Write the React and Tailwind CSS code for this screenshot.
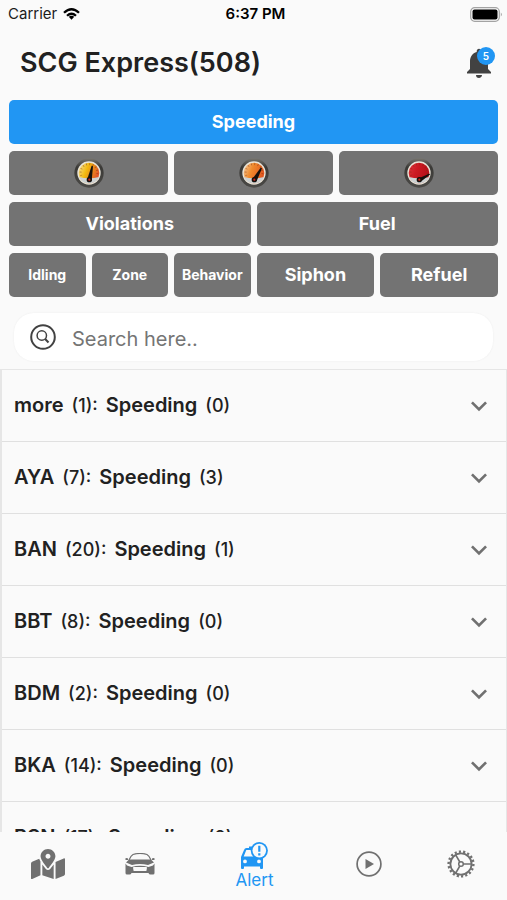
import { useState } from "react";
import { FaMapMarkedAlt } from "react-icons/fa";
import { MdKeyboardArrowDown, MdNotifications } from "react-icons/md";

const groups = [
  { name: "more", total: 1, count: 0 },
  { name: "AYA", total: 7, count: 3 },
  { name: "BAN", total: 20, count: 1 },
  { name: "BBT", total: 8, count: 0 },
  { name: "BDM", total: 2, count: 0 },
  { name: "BKA", total: 14, count: 0 },
  { name: "BSN", total: 17, count: 0 },
];

const gauges = [
  { label: "Low speeding", from: "#f7e3a0", to: "#f2b90f", edge: "#e2572b", tip: [28, 13] },
  { label: "Medium speeding", from: "#f7cfa0", to: "#f08a2c", edge: "#e2571f", tip: [34, 16] },
  { label: "High speeding", from: "#e0353c", to: "#cc1a22", edge: "#b50f18", tip: [39, 25] },
];

function Gauge({ gauge, id }) {
  const [x, y] = gauge.tip;
  return (
    <svg viewBox="0 0 48 48" className="h-8 w-8" aria-hidden="true">
      <defs>
        <linearGradient id={`face-${id}`} x1="0" y1="0" x2="1" y2="0.4">
          <stop offset="0" stopColor={gauge.from} />
          <stop offset="0.45" stopColor={gauge.to} />
          <stop offset="1" stopColor={gauge.edge} />
        </linearGradient>
        <linearGradient id={`rim-${id}`} x1="0" y1="0" x2="0" y2="1">
          <stop offset="0" stopColor="#77756f" />
          <stop offset="0.3" stopColor="#3a3936" />
          <stop offset="1" stopColor="#4b4a47" />
        </linearGradient>
      </defs>
      <circle cx="24" cy="24" r="22" fill={`url(#rim-${id})`} />
      <circle cx="24" cy="24" r="17.5" fill="#e9e4d8" />
      <circle cx="24" cy="24" r="15.5" fill={`url(#face-${id})`} />
      <path d="M9 30Q24 34 39 30A16.500 16.500 0 0 1 9 30Z" fill="#cdd2d3" />
      <path
        d="M12.500 28A12.500 12.500 0 1 1 35.500 28"
        fill="none"
        stroke="#7a2c10"
        strokeOpacity="0.5"
        strokeWidth="3"
        strokeDasharray="1.200 3.800"
      />
      <path d={`M21.500 33L${x} ${y}L${x + 2} ${y + 1}L28 36Z`} fill="#15100c" />
      <circle cx="24.500" cy="34" r="4" fill="#15100c" />
      <circle cx="24.500" cy="34" r="1.600" fill="#d02418" />
    </svg>
  );
}

function FilterButton({ children, active, small, ...rest }) {
  return (
    <button
      type="button"
      aria-pressed={active}
      className={`flex h-11 min-w-0 items-center justify-center rounded-[5px] font-bold text-white ${
        active ? "bg-[#2196f3]" : "bg-[#737373]"
      } ${small ? "text-sm" : "text-lg"}`}
      {...rest}
    >
      {children}
    </button>
  );
}

function StatusBar() {
  return (
    <div className="flex h-7 shrink-0 items-center pl-2 pr-1 text-[15px] text-[#1c1c1c]">
      <div className="flex flex-1 items-center gap-1.5">
        <span>Carrier</span>
        <svg viewBox="0 0 34 24" className="h-3 w-[17px]" fill="none" stroke="#000" strokeWidth="4.600" aria-hidden="true">
          <path d="M2 9.500Q17 -4.500 32 9.500" />
          <path d="M8 15.500Q17 7.500 26 15.500" />
          <path d="M11.500 17.500Q17 13 22.500 17.500L17 23.500Z" fill="#000" stroke="none" />
        </svg>
      </div>
      <span className="font-semibold text-black">6:37 PM</span>
      <div className="flex flex-1 justify-end">
        <svg viewBox="0 0 33 15" className="h-[15px] w-[33px]" aria-hidden="true">
          <rect x="0.700" y="0.700" width="28.600" height="13.600" rx="4" fill="none" stroke="#a3a3a3" strokeWidth="1.200" />
          <rect x="2.500" y="2.500" width="25" height="10" rx="2" fill="#000" />
          <path d="M30.800 5.500Q33 7.500 30.800 9.500Z" fill="#a3a3a3" />
        </svg>
      </div>
    </div>
  );
}

function CarIcon() {
  return (
    <svg viewBox="0 0 60 44" className="h-[22px] w-[30px]" fill="currentColor" aria-hidden="true">
      <path d="M8 14Q12 5 16 3Q30 -1 44 3Q48 5 52 14" fill="none" stroke="currentColor" strokeWidth="2.400" />
      <path d="M0 12Q3 9 6 11L6 14H2Z M60 12Q57 9 54 11L54 14H58Z" />
      <path d="M8 13H52L58 19L46 24Q30 20 14 24L2 19Z" />
      <path
        fillRule="evenodd"
        d="M1 21L4 25L13 28Q30 23 47 28L56 25L59 21V40Q59 43 56 43H51Q48 43 47 40H13Q12 43 9 43H4Q1 43 1 40ZM16 29Q16 28 18 28H42Q44 28 44 29L43 35Q43 36 41 36H19Q17 36 17 35Z"
      />
    </svg>
  );
}

function AlertCarIcon() {
  return (
    <svg viewBox="0 0 28 28" className="h-7 w-7" aria-hidden="true">
      <path
        fillRule="evenodd"
        fill="#2196f3"
        d="M4 8Q4.700 6 6.500 6H9V4.500H12V6H18L23 16.500V26Q23 27 22 27H21Q20 27 20 26V24.500H4V26Q4 27 3 27H2Q1 27 1 26V15ZM6.300 8L3.700 14.500H20.300L17.700 8ZM5 17.500A1.900 1.900 0 1 0 5 21.300A1.900 1.900 0 1 0 5 17.500ZM19 17.500A1.900 1.900 0 1 0 19 21.300A1.900 1.900 0 1 0 19 17.500Z"
      />
      <circle cx="19.300" cy="8.600" r="8.600" fill="#2196f3" />
      <circle cx="19.300" cy="8.600" r="6.800" fill="#fafafa" />
      <path d="M19.300 3.800V9.800M19.300 11.300V13.400" stroke="#2196f3" strokeWidth="2.200" />
    </svg>
  );
}

function PlayIcon() {
  return (
    <svg viewBox="0 0 26 26" className="h-[26px] w-[26px]" aria-hidden="true">
      <circle cx="13" cy="13" r="11.900" fill="none" stroke="currentColor" strokeWidth="1.700" />
      <path d="M9.500 8L18 13L9.500 18Z" fill="currentColor" />
    </svg>
  );
}

function CogIcon() {
  return (
    <svg viewBox="0 0 28 28" className="h-7 w-7" fill="none" stroke="currentColor" aria-hidden="true">
      <circle cx="14" cy="14" r="12.400" strokeWidth="2.400" strokeDasharray="2 2" pathLength="72" />
      <circle cx="14" cy="14" r="10.600" strokeWidth="1.800" />
      <circle cx="14" cy="14" r="2.300" strokeWidth="1.500" />
      <path d="M16.300 14H24.500M12.800 12L8.700 4.900M12.800 16L8.700 23.100" strokeWidth="1.600" />
    </svg>
  );
}

const tabs = [
  { label: "Map", icon: <FaMapMarkedAlt className="h-[34px] w-[34px]" /> },
  { label: "Vehicles", icon: <CarIcon /> },
  { label: "Alert", icon: <AlertCarIcon /> },
  { label: "Playback", icon: <PlayIcon /> },
  { label: "Settings", icon: <CogIcon /> },
];

export default function App() {
  const [query, setQuery] = useState("");
  const [tab, setTab] = useState("Alert");
  const shown = groups.filter((g) => g.name.toLowerCase().includes(query.toLowerCase()));

  return (
    <div className="flex h-screen flex-col overflow-hidden bg-[#fafafa] font-[Inter,sans-serif] text-[#212121]">
      <StatusBar />

      <header className="flex h-[72px] shrink-0 items-center justify-between pb-0.5 pl-5 pr-2.5">
        <h1 className="text-[27px] font-semibold">SCG Express(508)</h1>
        <button type="button" aria-label="Notifications, 5 new" className="relative text-[#424242]">
          <MdNotifications className="h-9 w-9" />
          <span className="absolute right-0.5 top-0.5 flex h-[18px] w-[18px] items-center justify-center rounded-full bg-[#2196f3] text-[10px] font-semibold text-white">
            5
          </span>
        </button>
      </header>

      {/* Alert type filters */}
      <section className="grid shrink-0 gap-[7px] px-[9px]">
        <FilterButton active>Speeding</FilterButton>
        <div className="grid grid-cols-3 gap-1.5">
          {gauges.map((g, i) => (
            <FilterButton key={g.label} aria-label={g.label}>
              <Gauge gauge={g} id={i} />
            </FilterButton>
          ))}
        </div>
        <div className="grid grid-cols-2 gap-1.5">
          <FilterButton>Violations</FilterButton>
          <FilterButton>Fuel</FilterButton>
        </div>
        <div className="grid grid-cols-2 gap-1.5">
          <div className="grid grid-cols-3 gap-1.5">
            <FilterButton small>Idling</FilterButton>
            <FilterButton small>Zone</FilterButton>
            <FilterButton small>Behavior</FilterButton>
          </div>
          <div className="grid grid-cols-2 gap-1.5">
            <FilterButton>Siphon</FilterButton>
            <FilterButton>Refuel</FilterButton>
          </div>
        </div>
      </section>

      {/* Search */}
      <div className="shrink-0 px-3.5 pb-2 pt-4">
        <label className="flex h-12 items-center gap-4 rounded-[20px] bg-white px-4 shadow-[0_0_2px_#ececec]">
          <svg viewBox="0 0 26 26" className="h-[26px] w-[26px] shrink-0" fill="none" stroke="#424242" aria-hidden="true">
            <circle cx="13" cy="13" r="11.800" strokeWidth="2" />
            <circle cx="11.800" cy="11.500" r="4.700" strokeWidth="1.500" />
            <path d="M15.200 15L18.500 18.500" strokeWidth="2" />
          </svg>
          <input
            type="text"
            aria-label="Search"
            placeholder="Search here.."
            value={query}
            onChange={(e) => setQuery(e.target.value)}
            className="w-full bg-transparent pt-1 text-xl outline-none placeholder:text-[#757575]"
          />
        </label>
      </div>

      {/* Vehicle groups */}
      <ul className="min-h-0 flex-1 overflow-y-auto border-l-2 border-r border-t border-[#e6e6e6] [scrollbar-width:none]">
        {shown.map((g) => (
          <li key={g.name}>
            <button
              type="button"
              aria-expanded="false"
              className="flex h-[72px] w-full items-center justify-between border-b border-[#e0e0e0] pl-3 pr-[11px] text-left"
            >
              <span className="flex items-baseline gap-2 text-lg font-medium">
                <span className="text-xl font-semibold">{g.name}</span>
                <span>({g.total}):</span>
                <span className="text-xl font-semibold">Speeding</span>
                <span>({g.count})</span>
              </span>
              <MdKeyboardArrowDown className="h-8 w-8 text-[#707070]" />
            </button>
          </li>
        ))}
      </ul>

      <nav className="flex h-[68px] shrink-0 bg-[#fafafa] pl-0.5 text-[#707070]">
        {tabs.map((t) => (
          <button
            key={t.label}
            type="button"
            aria-label={t.label}
            onClick={() => setTab(t.label)}
            className={`flex flex-col items-center justify-center ${
              tab === t.label ? "flex-3 text-[#2196f3]" : "flex-2 pb-1"
            }`}
          >
            {t.icon}
            {tab === t.label && <span className="text-[17px] leading-5">{t.label}</span>}
          </button>
        ))}
      </nav>
    </div>
  );
}
